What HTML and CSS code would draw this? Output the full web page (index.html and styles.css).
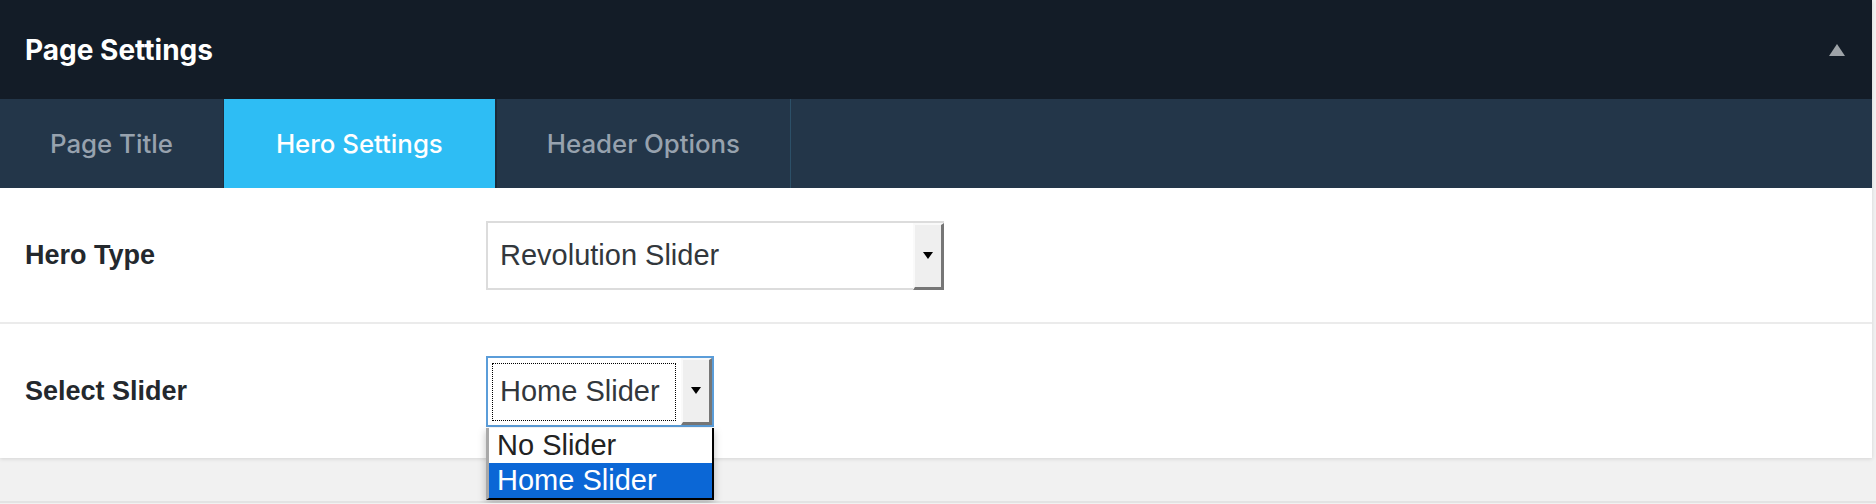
FILE: index.html
```html
<!DOCTYPE html>
<html lang="en">
  <head>
    <meta charset="UTF-8" />
    <meta name="viewport" content="width=device-width, initial-scale=1.0" />
    <title>Page Settings</title>
    <link rel="stylesheet" href="styles.css">
  </head>
  <body>
    <div class="postbox">
      <div class="postbox-header">
        <h2>Page Settings</h2>
        <span class="toggle-arrow"></span>
      </div>
      <nav class="tabs">
        <a href="#" class="tab">Page Title</a>
        <a href="#" class="tab active">Hero Settings</a>
        <a href="#" class="tab">Header Options</a>
      </nav>

      <div class="field-row">
        <label>Hero Type</label>
        <div class="select select-wide">
          <span class="select-value">Revolution Slider</span>
          <span class="select-btn"></span>
        </div>
      </div>

      <div class="field-row">
        <label>Select Slider</label>
        <div class="select-wrap">
          <div class="select select-focus">
            <span class="select-value">Home Slider</span>
            <span class="select-btn"></span>
          </div>
          <ul class="select-list">
            <li>No Slider</li>
            <li class="selected">Home Slider</li>
          </ul>
        </div>
      </div>
    </div>
    <div class="next-box"></div>
  </body>
</html>
```

FILE: styles.css
```css
body {
  font-family: "Liberation Sans", Arial, sans-serif;
  background-color: #f1f1f1;
  margin: 0;
  padding: 0;
  color: #23282d;
}
.postbox {
  margin-right: 4px;
  background: #fff;
  box-shadow: 0 1px 4px rgba(0, 0, 0, 0.12);
}
.postbox-header {
  display: flex;
  justify-content: space-between;
  align-items: center;
  height: 99px;
  padding: 0 27px 0 25px;
  background: #131c27;
}
.postbox-header h2 {
  margin: 0;
  font-family: Inter, sans-serif;
  font-size: 28px;
  font-weight: 700;
  color: #fff;
}
.toggle-arrow {
  width: 0;
  height: 0;
  border-left: 8px solid transparent;
  border-right: 8px solid transparent;
  border-bottom: 12px solid #9ea3a8;
}
.tabs {
  display: flex;
  height: 89px;
  background: #233649;
}
.tab {
  display: flex;
  align-items: center;
  padding: 0 50px;
  font-family: Inter, sans-serif;
  font-size: 25.8px;
  font-weight: 500;
  color: #97a2ae;
  text-decoration: none;
  border-right: 1px solid #1c2d3e;
}
.tab.active {
  padding: 0 52px;
  background: #2ebdf4;
  color: #fff;
  border-right: 2px solid #1a2938;
}
.tab:last-child {
  border-right-color: #2c5068;
}
.field-row {
  display: flex;
  align-items: center;
  height: 134px;
  padding: 0 25px;
}
.field-row + .field-row {
  border-top: 2px solid #ebebeb;
}
.field-row:first-of-type {
  height: 135px;
}
.field-row label {
  width: 461px;
  font-size: 27px;
  font-weight: 700;
  color: #23282d;
}
.select {
  display: flex;
  box-sizing: border-box;
  height: 69px;
  border: 2px solid #dcdcdc;
  background: #fff;
  font-size: 29px;
  color: #32373c;
}
.select-wide {
  width: 458px;
}
.select-value {
  flex: 1;
  display: flex;
  align-items: center;
  padding-left: 12px;
}
.select-btn {
  display: flex;
  align-items: center;
  justify-content: center;
  box-sizing: border-box;
  width: 31px;
  margin: 0 -2px -2px 0;
  background: #efefef;
  border-top: 2px solid #f9f9f9;
  border-left: 2px solid #fafafa;
  border-right: 3px solid #767676;
  border-bottom: 3px solid #767676;
}
.select-btn::after {
  content: "";
  border-left: 5px solid transparent;
  border-right: 5px solid transparent;
  border-top: 7px solid #000;
}
.select-wrap {
  position: relative;
}
.select-focus {
  width: 228px;
  height: 71px;
  border-color: #5b9dd9;
}
.select-focus .select-btn {
  margin: 0;
}
.select-focus .select-value {
  margin: 6px 6px 5px 5px;
  padding-left: 7px;
  outline: 1px dotted #000;
}
.select-list {
  position: absolute;
  top: 100%;
  left: 0;
  box-sizing: border-box;
  width: 228px;
  margin: 1px 0 0;
  padding: 0;
  list-style: none;
  background: #fff;
  border-left: 3px solid #a9a9a9;
  border-right: 2px solid #000;
  border-bottom: 2px solid #000;
  box-shadow: 0 3px 8px rgba(0, 0, 0, 0.25);
  font-size: 29px;
  color: #222;
}
.select-list li {
  height: 35px;
  line-height: 35px;
  padding-left: 8px;
}
.select-list li.selected {
  background: #0b67d6;
  color: #fff;
}
.next-box {
  margin-top: 43px;
  border-top: 2px solid #e3e3e3;
}
```
